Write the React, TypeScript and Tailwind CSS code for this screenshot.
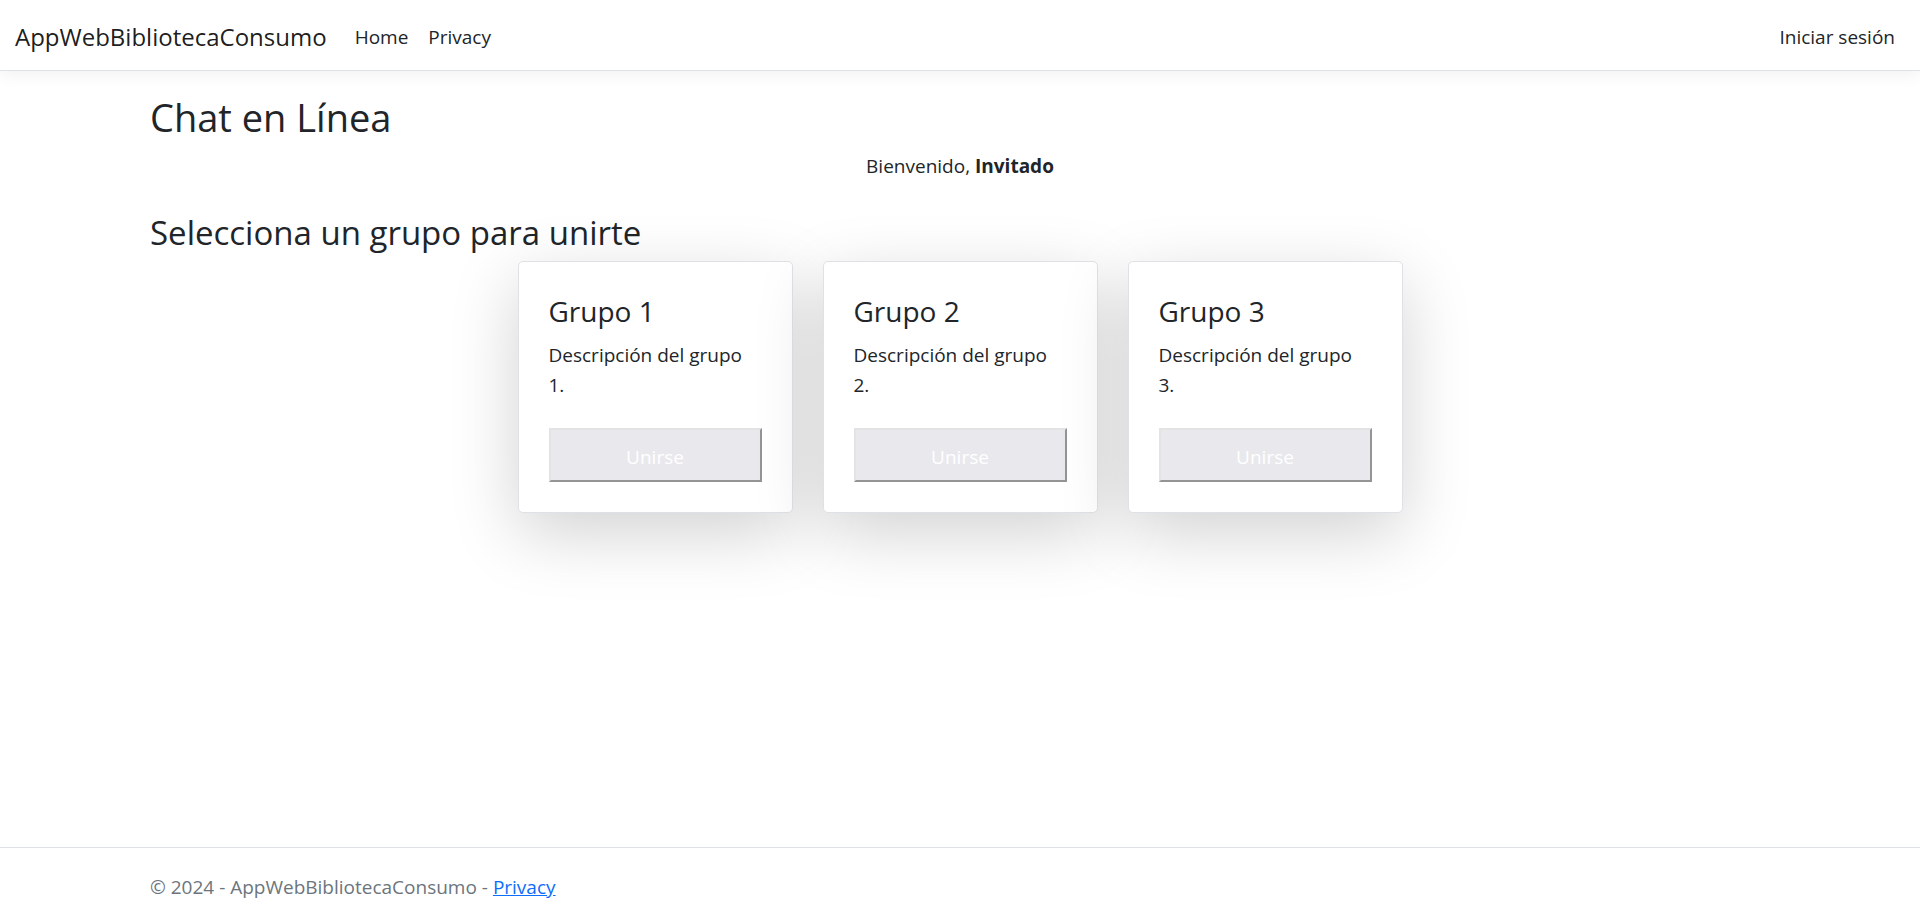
const groups = [
  { id: 1, name: 'Grupo 1', description: 'Descripción del grupo 1.' },
  { id: 2, name: 'Grupo 2', description: 'Descripción del grupo 2.' },
  { id: 3, name: 'Grupo 3', description: 'Descripción del grupo 3.' },
];

type Group = (typeof groups)[number];

function Header() {
  return (
    <header className="border-b border-[#dee2e6] bg-white shadow-[0_5px_15px_rgba(0,0,0,0.05)]">
      <nav className="flex items-center px-[15px] pt-3 pb-2">
        <a href="#" className="mr-[18px] text-[24px] leading-[38px] text-black/90">
          AppWebBibliotecaConsumo
        </a>
        <ul className="flex grow">
          <li>
            <a href="#" className="block p-[10px]">Home</a>
          </li>
          <li>
            <a href="#privacy" className="block p-[10px]">Privacy</a>
          </li>
        </ul>
        <a href="#login" className="block p-[10px]">Iniciar sesión</a>
      </nav>
    </header>
  );
}

function GroupCard({ group }: { group: Group }) {
  return (
    <article className="w-[275px] rounded-[5px] border border-[#dee2e6] bg-white p-[30px] shadow-[0_20px_68px_rgba(0,0,0,0.18)]">
      <h4 className="mb-[10px] text-[28px] leading-[38px]">{group.name}</h4>
      <p className="mb-7">{group.description}</p>
      <button
        type="button"
        className="block w-full border-2 border-t-[#e3e3e3] border-r-[#949494] border-b-[#949494] border-l-[#e3e3e3] bg-[#e9e8ed] pt-3 pb-2 text-white"
      >
        Unirse
      </button>
    </article>
  );
}

export default function App() {
  return (
    <div className="flex min-h-screen flex-col bg-white font-['Open_Sans','Noto_Sans',sans-serif] text-[19px] leading-[30px] text-[#212529]">
      <Header />
      <main className="mx-auto w-full max-w-[1650px] px-[15px] pt-[22px] pb-5">
        <h2 className="mb-[10px] text-[38px] leading-[48px]">Chat en Línea</h2>
        <p className="mb-[30px] text-center">
          Bienvenido, <strong className="font-bold">Invitado</strong>
        </p>
        <h3 className="mb-[6px] text-[33px] leading-[44px]">Selecciona un grupo para unirte</h3>
        <div className="flex flex-wrap justify-center gap-[30px]">
          {groups.map((group) => (
            <GroupCard key={group.id} group={group} />
          ))}
        </div>
      </main>
      <footer className="mt-auto border-t border-[#dee2e6] pt-[3px] leading-[72px] text-[#6c757d]">
        <div className="mx-auto w-full max-w-[1650px] px-[15px]">
          © 2024 - AppWebBibliotecaConsumo -{' '}
          <a href="#privacy" className="text-[#0d6efd] underline">Privacy</a>
        </div>
      </footer>
    </div>
  );
}
